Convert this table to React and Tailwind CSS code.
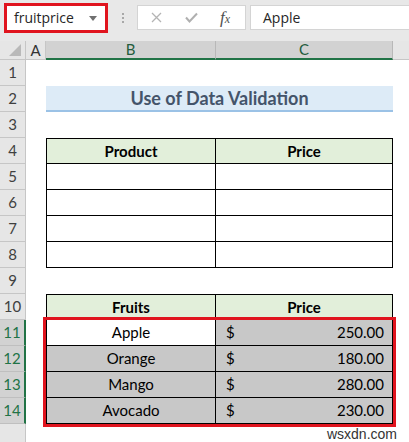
import React from 'react';

const rowNums = [1, 2, 3, 4, 5, 6, 7, 8, 9, 10, 11, 12, 13, 14];
const fruits = [
  { name: 'Apple', price: '250.00' },
  { name: 'Orange', price: '180.00' },
  { name: 'Mango', price: '280.00' },
  { name: 'Avocado', price: '230.00' },
];

function Spacer() {
  return <div className="h-[26px]" />;
}

export default function App() {
  return (
    <div className="relative w-[409px] h-[442px] overflow-hidden bg-white font-['Lato',sans-serif] text-[15px] text-black">
      {/* Formula bar */}
      <div className="h-[41px] bg-[#e8e8e8] flex items-start pt-[3px]">
        <div className="ml-[4px] w-[104px] h-[30px] border-[3px] border-[#e0141e] bg-white flex items-center justify-between pl-[7px] pr-[8px]">
          <span className="text-[14px] text-[#262626] font-['Open_Sans',sans-serif] leading-none">fruitprice</span>
          <span className="w-0 h-0 border-l-[4px] border-r-[4px] border-t-[5px] border-l-transparent border-r-transparent border-t-[#707070]" />
        </div>
        <div className="w-[29px] h-[30px] flex flex-col items-center justify-center gap-[2px]">
          <span className="w-[2px] h-[2px] bg-[#a8a8a8]" />
          <span className="w-[2px] h-[2px] bg-[#a8a8a8]" />
          <span className="w-[2px] h-[2px] bg-[#a8a8a8]" />
        </div>
        <div className="mt-[2px] w-[109px] h-[25px] bg-white border border-[#d4d4d4] flex items-center">
          <svg className="ml-[13px]" width="11" height="11" viewBox="0 0 11 11">
            <path d="M1 1L10 10M10 1L1 10" stroke="#b4b4b4" strokeWidth="1.3" fill="none" />
          </svg>
          <svg className="ml-[23px]" width="13" height="11" viewBox="0 0 13 11">
            <path d="M1 5.5L4.5 9.5L12 1.5" stroke="#b0b0b0" strokeWidth="2" fill="none" />
          </svg>
          <span className="ml-[22px] font-['Liberation_Serif',serif] italic text-[17px] text-[#505050] leading-none">
            f<span className="text-[12px]">x</span>
          </span>
        </div>
        <div className="mt-[2px] ml-[4px] flex-1 h-[25px] bg-white border border-r-0 border-[#d4d4d4] flex items-center pl-[12px]">
          <span className="text-[14px] text-[#262626] font-['Open_Sans',sans-serif] leading-none">Apple</span>
        </div>
      </div>

      {/* Sheet */}
      <div className="flex">
        {/* Row headers */}
        <div className="w-[26px] flex flex-col">
          <div className="h-[19px] bg-[#e6e6e6] border-r border-b border-[#c6c6c6] flex items-end justify-end pr-[4px] pb-[3px]">
            <svg width="12" height="12" viewBox="0 0 12 12">
              <path d="M12 0L12 12L0 12Z" fill="#b9b9b9" />
            </svg>
          </div>
          {rowNums.map(n => {
            const sel = n >= 11;
            return (
              <div
                key={n}
                className={`h-[26px] flex items-center justify-center border-b text-[15px] ${sel
                    ? 'bg-[#d2d2d2] text-[#217346] border-b-[#bfbfbf] border-r-2 border-r-[#217346]'
                    : 'bg-[#e6e6e6] text-[#404040] border-b-[#c6c6c6] border-r border-r-[#c6c6c6]'
                  }`}
              >
                {n}
              </div>
            );
          })}
          <div className="h-[20px] bg-[#e6e6e6] border-r border-[#c6c6c6]" />
        </div>

        {/* Cells */}
        <div className="flex-1 flex flex-col">
          {/* Column headers */}
          <div className="h-[19px] flex text-[15px]">
            <div className="w-[20px] bg-[#e6e6e6] border-r border-b border-[#c6c6c6] flex items-center justify-center text-[#333]">A</div>
            <div className="w-[170px] bg-[#d2d2d2] border-r border-[#b8b8b8] border-b-2 border-b-[#217346] flex items-center justify-center text-[#235c3c]">B</div>
            <div className="w-[177px] bg-[#d2d2d2] border-r border-[#b8b8b8] border-b-2 border-b-[#217346] flex items-center justify-center text-[#235c3c]">C</div>
            <div className="flex-1 bg-[#e6e6e6] border-b border-[#c6c6c6]" />
          </div>

          <div className="pl-[20px] flex flex-col">
            <Spacer />
            {/* Title */}
            <div className="w-[347px] h-[26px] bg-[#ddebf7] border-b-2 border-[#9bc2e6] flex items-center justify-center">
              <span className="font-bold text-[18px] text-[#44546a] leading-none">Use of Data Validation</span>
            </div>
            <Spacer />

            {/* Product table */}
            <div className="w-[347px] flex flex-col">
              <div className="h-[26px] flex bg-[#e2efda] border-t border-b border-black font-bold">
                <div className="w-[170px] border-l border-r border-black flex items-center justify-center">Product</div>
                <div className="w-[177px] border-r border-black flex items-center justify-center">Price</div>
              </div>
              {[5, 6, 7, 8].map(n => (
                <div key={n} className="h-[26px] flex border-b border-black">
                  <div className="w-[170px] border-l border-r border-black" />
                  <div className="w-[177px] border-r border-black" />
                </div>
              ))}
            </div>
            <Spacer />

            {/* Fruits table */}
            <div className="w-[347px] flex flex-col">
              <div className="h-[26px] flex bg-[#e2efda] border-t border-b border-black font-bold">
                <div className="w-[170px] border-l border-r border-black flex items-center justify-center">Fruits</div>
                <div className="w-[177px] border-r border-black flex items-center justify-center">Price</div>
              </div>
              <div className="relative flex flex-col">
                {fruits.map((f, i) => (
                  <div key={f.name} className="h-[26px] flex border-b border-black">
                    <div className={`w-[170px] border-l border-r border-black flex items-center justify-center ${i === 0 ? 'bg-white' : 'bg-[#c8c8c8]'}`}>
                      {f.name}
                    </div>
                    <div className="w-[177px] border-r border-black bg-[#c8c8c8] flex items-center justify-between pl-[10px] pr-[8px]">
                      <span>$</span>
                      <span>{f.price}</span>
                    </div>
                  </div>
                ))}
                {/* selection frame */}
                <div className="absolute -left-[3px] -top-[3px] -right-[3px] -bottom-[3px] border-[3px] border-[#e0141e] pointer-events-none" />
              </div>
            </div>
          </div>
        </div>
      </div>

      <span className="absolute right-[12px] bottom-[1px] text-[14px] text-[#333] font-['Liberation_Sans',sans-serif] leading-none">wsxdn.com</span>
    </div>
  );
}
